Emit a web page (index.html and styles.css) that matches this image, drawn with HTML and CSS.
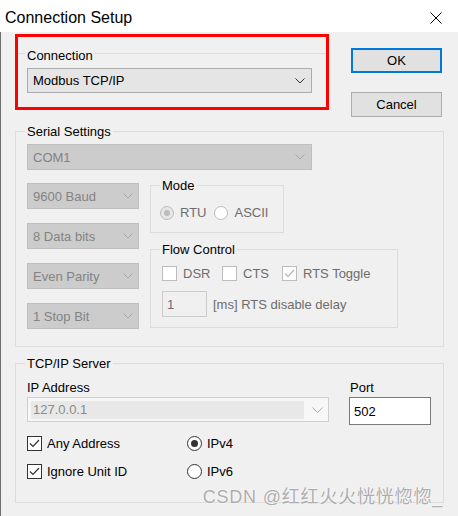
FILE: index.html
```html
<!DOCTYPE html>
<html lang="en">
<head>
<meta charset="utf-8">
<title>Connection Setup</title>
<link rel="stylesheet" href="styles.css">
</head>
<body>
<div class="window">
  <div class="titlebar">
    <span class="title">Connection Setup</span>
    <svg class="close" width="12" height="12" viewBox="0 0 12 12"><path d="M0.5 0.5 L11.5 11.5 M11.5 0.5 L0.5 11.5" stroke="#000" stroke-width="1" fill="none"/></svg>
  </div>
  <div class="body">
    <div class="top">
      <div class="highlight">
        <div class="conn-head">
          <span class="rule lead"></span>
          <span class="label">Connection</span>
          <span class="rule fill"></span>
        </div>
        <div class="combo conn-combo">
          <span>Modbus TCP/IP</span>
          <svg class="chev" width="10" height="6" viewBox="0 0 10 6"><polyline points="0.5,0.5 5,5 9.5,0.5" fill="none" stroke="#333" stroke-width="1"/></svg>
        </div>
      </div>
      <div class="buttons">
        <div class="btn btn-default">OK</div>
        <div class="btn">Cancel</div>
      </div>
    </div>

    <fieldset class="group serial">
      <legend>Serial Settings</legend>
      <div class="combo disabled com-combo">
        <span>COM1</span>
        <svg class="chev" width="10" height="6" viewBox="0 0 10 6"><polyline points="0.5,0.5 5,5 9.5,0.5" fill="none" stroke="#a6a6a6" stroke-width="1"/></svg>
      </div>
      <div class="serial-row">
        <div class="col-left">
          <div class="combo disabled small"><span>9600 Baud</span><svg class="chev" width="10" height="6" viewBox="0 0 10 6"><polyline points="0.5,0.5 5,5 9.5,0.5" fill="none" stroke="#a6a6a6" stroke-width="1"/></svg></div>
          <div class="combo disabled small"><span>8 Data bits</span><svg class="chev" width="10" height="6" viewBox="0 0 10 6"><polyline points="0.5,0.5 5,5 9.5,0.5" fill="none" stroke="#a6a6a6" stroke-width="1"/></svg></div>
          <div class="combo disabled small"><span>Even Parity</span><svg class="chev" width="10" height="6" viewBox="0 0 10 6"><polyline points="0.5,0.5 5,5 9.5,0.5" fill="none" stroke="#a6a6a6" stroke-width="1"/></svg></div>
          <div class="combo disabled small"><span>1 Stop Bit</span><svg class="chev" width="10" height="6" viewBox="0 0 10 6"><polyline points="0.5,0.5 5,5 9.5,0.5" fill="none" stroke="#a6a6a6" stroke-width="1"/></svg></div>
        </div>
        <div class="col-right">
          <fieldset class="group mode">
            <legend>Mode</legend>
            <div class="radio-row">
              <span class="opt dis"><span class="radio dis checked"></span>RTU</span>
              <span class="opt dis"><span class="radio dis"></span>ASCII</span>
            </div>
          </fieldset>
          <fieldset class="group flow">
            <legend>Flow Control</legend>
            <div class="check-row">
              <span class="opt dis w60"><span class="check dis"></span>DSR</span>
              <span class="opt dis w60"><span class="check dis"></span>CTS</span>
              <span class="opt dis"><span class="check dis"><svg width="13" height="13" viewBox="0 0 13 13"><polyline points="2,6.5 5,9.5 11,3" fill="none" stroke="#b5b5b5" stroke-width="1.2"/></svg></span>RTS Toggle</span>
            </div>
            <div class="delay-row">
              <span class="edit dis">1</span>
              <span class="dis-text">[ms] RTS disable delay</span>
            </div>
          </fieldset>
        </div>
      </div>
    </fieldset>

    <fieldset class="group tcp">
      <legend>TCP/IP Server</legend>
      <div class="ip-grid">
        <span>IP Address</span>
        <span class="port-label">Port</span>
        <div class="ip-combo">
          <span class="ip-field">127.0.0.1</span>
          <svg class="chev" width="11" height="6" viewBox="0 0 11 6"><polyline points="0.5,0.5 5.5,5.5 10.5,0.5" fill="none" stroke="#b0b0b0" stroke-width="1"/></svg>
        </div>
        <span class="edit port">502</span>
      </div>
      <div class="opts-grid">
        <span class="opt"><span class="check"><svg width="13" height="13" viewBox="0 0 13 13"><polyline points="2,6.5 5,9.5 11,3" fill="none" stroke="#333" stroke-width="1.2"/></svg></span>Any Address</span>
        <span class="opt"><span class="radio checked"></span>IPv4</span>
        <span class="opt"><span class="check"><svg width="13" height="13" viewBox="0 0 13 13"><polyline points="2,6.5 5,9.5 11,3" fill="none" stroke="#333" stroke-width="1.2"/></svg></span>Ignore Unit ID</span>
        <span class="opt"><span class="radio"></span>IPv6</span>
      </div>
    </fieldset>
  </div>
  <div class="watermark">CSDN @红红火火恍恍惚惚_</div>
</div>
</body>
</html>
```

FILE: styles.css
```css
* { box-sizing: border-box; }
html, body { margin: 0; padding: 0; }
body {
  font-family: "Liberation Sans", Arial, sans-serif;
  font-size: 13px;
  line-height: 15px;
  color: #000;
  background: #f0f0f0;
}
.window {
  position: relative;
  width: 458px;
  height: 516px;
  overflow: hidden;
  background: #f0f0f0;
}
.titlebar {
  height: 32px;
  background: #fff;
  display: flex;
  align-items: center;
  justify-content: space-between;
  padding: 1px 16px 0 5px;
}
.title { font-size: 16px; line-height: 31px; padding-top: 1px; }
.close { display: block; margin-top: 2px; }

.body {
  height: 484px;
  border-left: 1px solid #6e6e6e;
  padding: 2px 0 0 14px;
}
.top { display: flex; align-items: flex-start; }
.highlight {
  width: 314px;
  height: 76px;
  border: 3px solid #ff0000;
  padding-top: 11px;
}
.conn-head { display: flex; align-items: flex-start; height: 15px; }
.rule { height: 1px; background: #dcdcdc; margin-top: 5px; }
.rule.lead { width: 7px; }
.rule.fill { flex: 1; }
.conn-head .label { padding: 0 2px; }

.combo {
  display: flex;
  align-items: center;
  justify-content: space-between;
  height: 25px;
  border: 1px solid #acacac;
  background: #e5e5e5;
  padding: 0 6px 0 5px;
}
.chev { display: block; }
.conn-combo { width: 285px; margin: 5px 0 0 9px; padding-left: 5px; }
.combo.disabled {
  background: #cccccc;
  border-color: #bfbfbf;
  color: #838383;
  height: 26px;
}
.com-combo { width: 285px; }
.combo.small { width: 112px; padding-right: 5px; }

.buttons {
  margin: 14px 0 0 22px;
  display: flex;
  flex-direction: column;
  gap: 19px;
}
.btn {
  width: 91px;
  height: 25px;
  border: 1px solid #adadad;
  background: #e1e1e1;
  display: flex;
  align-items: center;
  justify-content: center;
}
.btn-default { border: 2px solid #0078d7; }

.group {
  margin: 0;
  border: 1px solid #dcdcdc;
  min-width: 0;
}
.group > legend { padding: 0 2px; line-height: 15px; }
.serial {
  width: 429px;
  margin-top: 7px;
  padding: 5px 0 17px 11px;
}
.serial > legend, .tcp > legend, .flow > legend { margin-left: -2px; }

.serial-row { display: flex; align-items: flex-start; gap: 11px; margin-top: 13px; }
.col-left { display: flex; flex-direction: column; gap: 14px; }
.col-right { margin-top: -5px; display: flex; flex-direction: column; }
.mode { width: 134px; padding: 12px 0 12px 9px; }
.flow { width: 248px; margin-top: 9px; padding: 9px 0 10px 11px; }

.radio-row, .check-row { display: flex; align-items: center; height: 15px; }
.radio-row { gap: 8px; }
.opt { display: inline-flex; align-items: center; gap: 5px; white-space: nowrap; }
.opt.dis { color: #6d6d6d; gap: 6px; }
.w60 { width: 60px; }

.radio {
  width: 15px;
  height: 15px;
  border: 1px solid #333;
  border-radius: 50%;
  background: #fff;
  display: flex;
  align-items: center;
  justify-content: center;
  flex: none;
}
.radio.checked::after {
  content: "";
  width: 7px;
  height: 7px;
  border-radius: 50%;
  background: #333;
}
.radio.dis { width: 14px; height: 14px; border-color: #bcbcbc; }
.radio.dis.checked { background: #e6e6e6; }
.radio.dis.checked::after { width: 6px; height: 6px; background: #bcbcbc; }

.check {
  width: 15px;
  height: 15px;
  border: 1px solid #333;
  background: #fff;
  display: flex;
  align-items: center;
  justify-content: center;
  flex: none;
}
.check svg { display: block; }
.check.dis { border-color: #bcbcbc; }

.delay-row { display: flex; align-items: center; gap: 6px; margin-top: 10px; }
.edit {
  display: flex;
  align-items: center;
  height: 26px;
  border: 1px solid #7a7a7a;
  background: #fff;
  padding-left: 4px;
}
.edit.dis { width: 45px; border-color: #cccccc; background: #f0f0f0; color: #6d6d6d; }
.dis-text { color: #6d6d6d; }

.tcp {
  width: 429px;
  margin-top: 9px;
  padding: 9px 0 23px 11px;
}
.ip-grid {
  display: grid;
  grid-template-columns: 302px 82px;
  column-gap: 20px;
  row-gap: 2px;
  align-items: start;
}
.port-label { padding-left: 1px; }
.ip-combo {
  height: 25px;
  border: 1px solid #cfcfcf;
  background: #f7f7f7;
  display: flex;
  align-items: center;
  padding: 0 5px 0 3px;
  gap: 8px;
}
.ip-field {
  flex: 1;
  height: 18px;
  background: #e8e8e8;
  color: #8a8a8a;
  padding-left: 2px;
  display: flex;
  align-items: center;
}
.edit.port { width: 82px; height: 28px; padding-left: 4px; }
.opts-grid {
  display: grid;
  grid-template-columns: 160px auto;
  row-gap: 13px;
  margin-top: 11px;
}
.opts-grid .opt { height: 15px; }

.watermark {
  position: absolute;
  right: 15px;
  top: 487px;
  font-family: "Liberation Sans", "Noto Sans CJK SC", sans-serif;
  font-size: 18px;
  line-height: 20px;
  letter-spacing: 0.8px;
  color: #adadad;
  text-shadow: 0 0 2px #fff, 0 0 1px #fff;
  white-space: nowrap;
}
```
